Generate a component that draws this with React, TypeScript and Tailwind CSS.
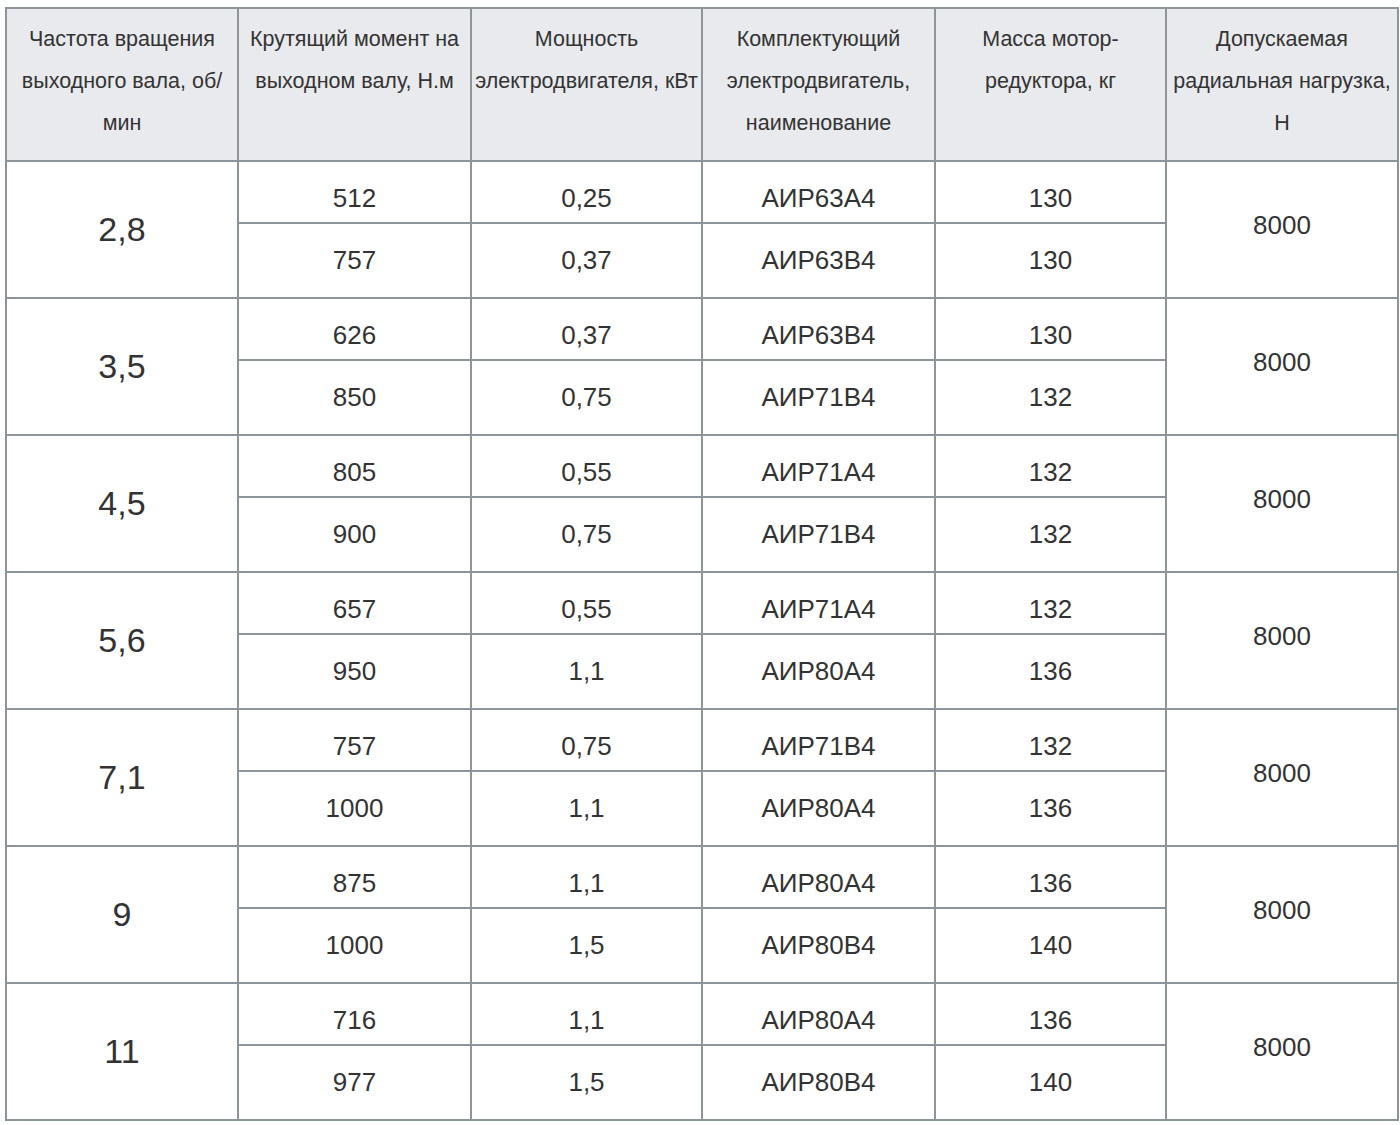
type Row = { torque: string; power: string; motor: string; mass: string };

type Group = { speed: string; load: string; rows: [Row, Row] };

const groups: Group[] = [
  {
    speed: '2,8',
    load: '8000',
    rows: [
      { torque: '512', power: '0,25', motor: 'АИР63А4', mass: '130' },
      { torque: '757', power: '0,37', motor: 'АИР63В4', mass: '130' },
    ],
  },
  {
    speed: '3,5',
    load: '8000',
    rows: [
      { torque: '626', power: '0,37', motor: 'АИР63В4', mass: '130' },
      { torque: '850', power: '0,75', motor: 'АИР71В4', mass: '132' },
    ],
  },
  {
    speed: '4,5',
    load: '8000',
    rows: [
      { torque: '805', power: '0,55', motor: 'АИР71А4', mass: '132' },
      { torque: '900', power: '0,75', motor: 'АИР71В4', mass: '132' },
    ],
  },
  {
    speed: '5,6',
    load: '8000',
    rows: [
      { torque: '657', power: '0,55', motor: 'АИР71А4', mass: '132' },
      { torque: '950', power: '1,1', motor: 'АИР80А4', mass: '136' },
    ],
  },
  {
    speed: '7,1',
    load: '8000',
    rows: [
      { torque: '757', power: '0,75', motor: 'АИР71В4', mass: '132' },
      { torque: '1000', power: '1,1', motor: 'АИР80А4', mass: '136' },
    ],
  },
  {
    speed: '9',
    load: '8000',
    rows: [
      { torque: '875', power: '1,1', motor: 'АИР80А4', mass: '136' },
      { torque: '1000', power: '1,5', motor: 'АИР80В4', mass: '140' },
    ],
  },
  {
    speed: '11',
    load: '8000',
    rows: [
      { torque: '716', power: '1,1', motor: 'АИР80А4', mass: '136' },
      { torque: '977', power: '1,5', motor: 'АИР80В4', mass: '140' },
    ],
  },
];

const th = 'border-2 border-[#8c9599] px-0.5 align-top pt-[9px] font-normal text-[21.5px] leading-[42px] text-[#333]';
const td = 'border-2 border-[#8c9599] px-1 text-center align-middle text-[26px] text-[#333]';

export default function App() {
  return (
    <div className="min-h-screen bg-white pl-[5px] pt-[7px] font-['Liberation_Sans',Arial,sans-serif]">
      <table className="w-[1392px] table-fixed border-collapse text-center">
        <colgroup>
          <col className="w-[232px]" />
          <col className="w-[233px]" />
          <col className="w-[231px]" />
          <col className="w-[233px]" />
          <col className="w-[231px]" />
          <col className="w-[232px]" />
        </colgroup>
        <thead>
          <tr className="h-[153px] bg-[#e8eaee]">
            <th className={th}>
              Частота вращения выходного вала, об/<wbr />мин
            </th>
            <th className={th}>Крутящий момент на выходном валу, Н.м</th>
            <th className={th}>Мощность электродвигателя, кВт</th>
            <th className={th}>Комплектующий электродвигатель, наименование</th>
            <th className={th}>Масса мотор-редуктора, кг</th>
            <th className={th}>Допускаемая радиальная нагрузка, Н</th>
          </tr>
        </thead>
        <tbody>
          {groups.map((group) => (
            <>
              <tr key={`${group.speed}-a`} className="h-[62px]">
                <td rowSpan={2} className={`${td} text-[34px]`}>
                  {group.speed}
                </td>
                <td className={`${td} pt-3`}>{group.rows[0].torque}</td>
                <td className={`${td} pt-3`}>{group.rows[0].power}</td>
                <td className={`${td} pt-3`}>{group.rows[0].motor}</td>
                <td className={`${td} pt-3`}>{group.rows[0].mass}</td>
                <td rowSpan={2} className={`${td} pb-2`}>
                  {group.load}
                </td>
              </tr>
              <tr key={`${group.speed}-b`} className="h-[75px]">
                <td className={td}>{group.rows[1].torque}</td>
                <td className={td}>{group.rows[1].power}</td>
                <td className={td}>{group.rows[1].motor}</td>
                <td className={td}>{group.rows[1].mass}</td>
              </tr>
            </>
          ))}
        </tbody>
      </table>
    </div>
  );
}
